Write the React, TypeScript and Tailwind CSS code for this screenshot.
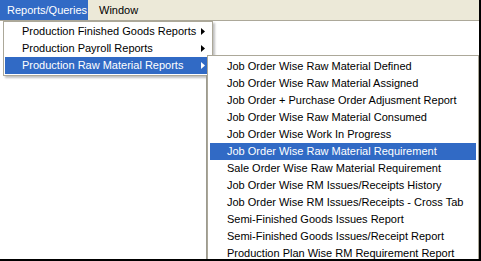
import { ReactNode } from "react";

const mainItems = [
  "Production Finished Goods Reports",
  "Production Payroll Reports",
  "Production Raw Material Reports",
];

const subItems = [
  "Job Order Wise Raw Material Defined",
  "Job Order Wise Raw Material Assigned",
  "Job Order + Purchase Order Adjusment Report",
  "Job Order Wise Raw Material Consumed",
  "Job Order Wise Work In Progress",
  "Job Order Wise Raw Material Requirement",
  "Sale Order Wise Raw Material Requirement",
  "Job Order Wise RM Issues/Receipts History",
  "Job Order Wise RM Issues/Receipts - Cross Tab",
  "Semi-Finished Goods Issues Report",
  "Semi-Finished Goods Issues/Receipt Report",
  "Production Plan Wise RM Requirement Report",
];

function Arrow({ white }: { white?: boolean }) {
  return (
    <svg width="4" height="7" viewBox="0 0 4 7" className="shrink-0">
      <path d="M0 0 L4 3.5 L0 7 Z" fill={white ? "#ffffff" : "#000000"} />
    </svg>
  );
}

function Row({ active, children }: { active?: boolean; children: ReactNode }) {
  return (
    <div
      className={
        "flex h-[17px] items-center " +
        (active ? "bg-[#316ac5] text-white" : "text-black")
      }
    >
      {children}
    </div>
  );
}

export default function App() {
  return (
    <div
      className="relative h-[261px] w-[481px] overflow-hidden border-b-2 border-r-2 border-black bg-white text-[11px]"
      style={{ fontFamily: '"Liberation Sans", Arial, sans-serif' }}
    >
      {/* menu bar */}
      <div className="flex h-[20px] items-center bg-[#ece9d8]">
        <div className="flex h-full w-[88px] items-center bg-[#316ac5] pl-[7px] text-white">
          Reports/Queries
        </div>
        <div className="pl-[11px] text-black">Window</div>
      </div>
      <div className="h-px bg-[#aca899]" />

      {/* main drop-down */}
      <div className="absolute left-[3px] top-[21px] w-[210px] border border-[#aca899] bg-white p-px shadow-[2px_2px_2px_rgba(0,0,0,0.25)]">
        {mainItems.map((t, i) => (
          <Row key={t} active={i === 2}>
            <span className="flex-1 pl-[17px]">{t}</span>
            <span className="pr-[6px]">
              <Arrow white={i === 2} />
            </span>
          </Row>
        ))}
      </div>

      {/* stray edge left of the submenu */}
      <div className="absolute left-[206px] top-[75px] h-[186px] w-px bg-[#9c9a90]" />

      {/* sub menu */}
      <div className="absolute left-[207px] top-[55px] h-[220px] w-[272px] border border-[#aca899] bg-white px-[2px] pt-[2px]">
        {subItems.map((t, i) => (
          <Row key={t} active={i === 5}>
            <span className="pl-[17px]">{t}</span>
          </Row>
        ))}
      </div>
    </div>
  );
}
